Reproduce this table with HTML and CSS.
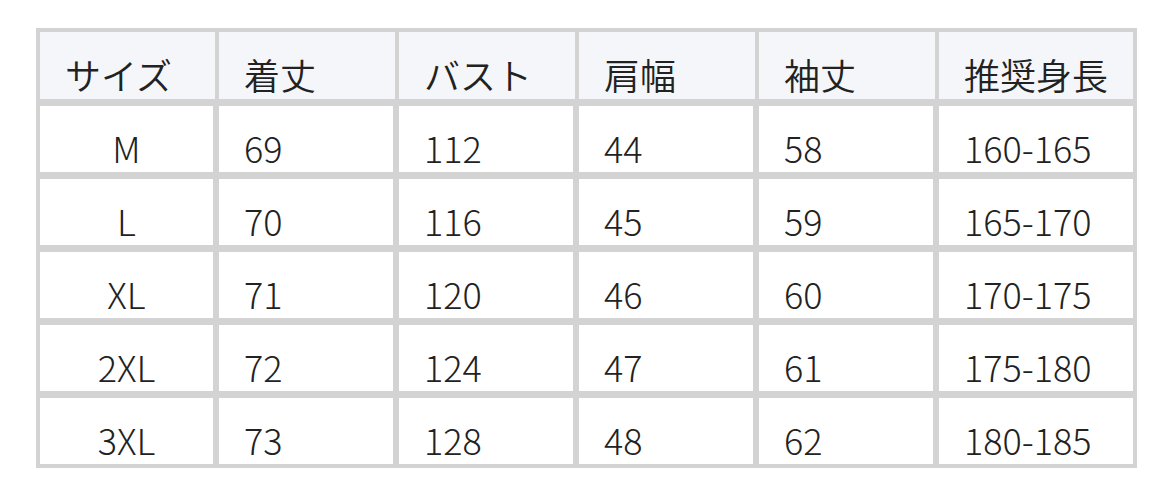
FILE: index.html
```html
<!DOCTYPE html>
<html lang="ja">
<head>
<meta charset="utf-8">
<title>サイズ表</title>
<link rel="stylesheet" href="styles.css">
</head>
<body>
<div class="wrap">
  <table class="size-table">
    <thead>
      <tr>
        <th class="c1">サイズ</th>
        <th class="c2">着丈</th>
        <th class="c3">バスト</th>
        <th class="c4">肩幅</th>
        <th class="c5">袖丈</th>
        <th class="c6">推奨身長</th>
      </tr>
    </thead>
    <tbody>
      <tr><td class="size">M</td><td>69</td><td>112</td><td>44</td><td>58</td><td>160-165</td></tr>
      <tr><td class="size">L</td><td>70</td><td>116</td><td>45</td><td>59</td><td>165-170</td></tr>
      <tr><td class="size">XL</td><td>71</td><td>120</td><td>46</td><td>60</td><td>170-175</td></tr>
      <tr><td class="size">2XL</td><td>72</td><td>124</td><td>47</td><td>61</td><td>175-180</td></tr>
      <tr><td class="size">3XL</td><td>73</td><td>128</td><td>48</td><td>62</td><td>180-185</td></tr>
    </tbody>
  </table>
</div>
</body>
</html>
```

FILE: styles.css
```css
html, body {
  margin: 0;
  padding: 0;
  background: #ffffff;
}

.wrap {
  padding: 28px 36px;
}

.size-table {
  box-sizing: border-box;
  width: 1101px;
  table-layout: fixed;
  border-collapse: separate;
  border-spacing: 0;
  border: 4px solid #d3d3d3;
  background: #d3d3d3;
  font-family: "Noto Sans CJK JP", "Noto Sans", sans-serif;
  font-size: 36px;
  line-height: 1;
  color: #222222;
}

.size-table th,
.size-table td {
  box-sizing: border-box;
  padding: 0 0 7px 25px;
  vertical-align: bottom;
  text-align: left;
  font-weight: 350;
  white-space: nowrap;
}

.size-table th {
  height: 67px;
  background: #f5f6fa;
}

.size-table td {
  height: 73px;
  background: #ffffff;
  border-top: 7px solid #d3d3d3;
  border-right: 2px solid #d3d3d3;
  font-weight: 300;
}

.size-table td:last-child {
  border-right: 0;
}

.size-table th + th,
.size-table td + td {
  border-left: 4px solid #d3d3d3;
}

.size-table .c1 { width: 175px; }
.size-table .c2,
.size-table .c3,
.size-table .c4,
.size-table .c5 { width: 180px; }
.size-table .c6 { width: 198px; }

.size-table td.size {
  text-align: center;
  padding-left: 0;
}
```
